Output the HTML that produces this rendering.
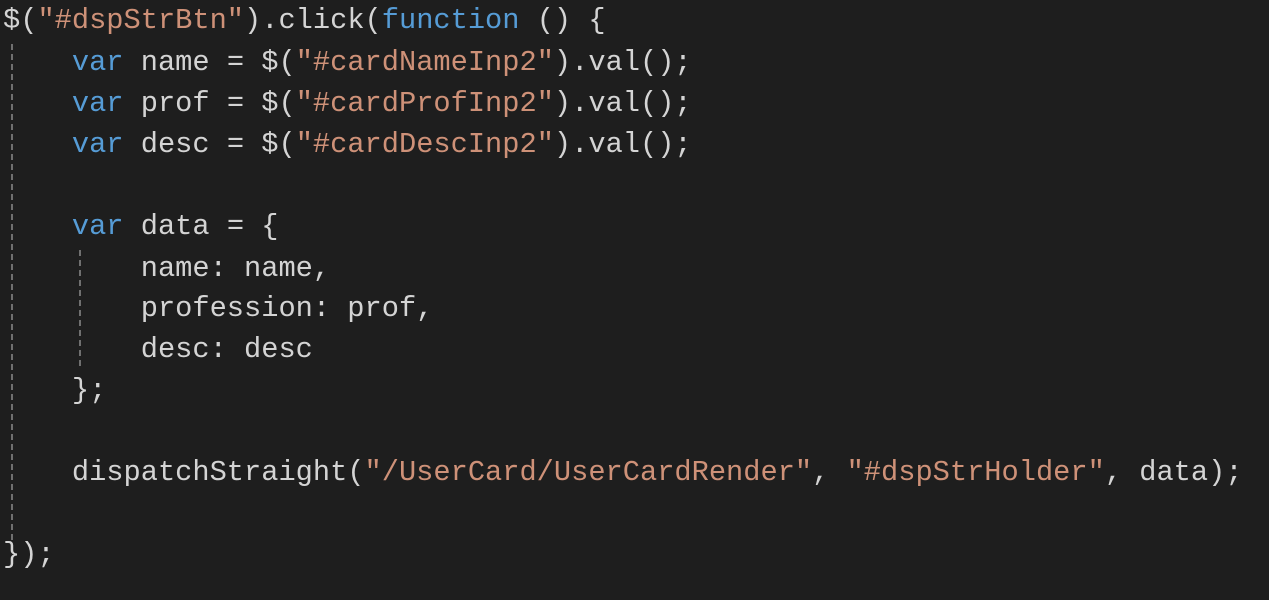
<!DOCTYPE html>
<html><head><meta charset="utf-8"><style>
html,body{margin:0;padding:0;background:#1e1e1e;width:1269px;height:600px;overflow:hidden}
.l{position:absolute;left:3px;height:41px;line-height:41px;font-family:"Liberation Mono",monospace;font-size:28.7px;color:#d4d4d4;white-space:pre}
.k{color:#569cd6}.s{color:#ce9178}
.g{position:absolute;width:2px;background:repeating-linear-gradient(to bottom,#707070 0 6px,transparent 6px 10px)}
</style></head><body>
<div class="g" style="left:11px;top:44px;height:496px"></div>
<div class="g" style="left:79px;top:250px;height:120px"></div>
<div class="l" style="top:0px">$(<span class="s">"#dspStrBtn"</span>).click(<span class="k">function</span> () {</div>
<div class="l" style="top:42px">    <span class="k">var</span> name = $(<span class="s">"#cardNameInp2"</span>).val();</div>
<div class="l" style="top:83px">    <span class="k">var</span> prof = $(<span class="s">"#cardProfInp2"</span>).val();</div>
<div class="l" style="top:124px">    <span class="k">var</span> desc = $(<span class="s">"#cardDescInp2"</span>).val();</div>
<div class="l" style="top:206px">    <span class="k">var</span> data = {</div>
<div class="l" style="top:248px">        name: name,</div>
<div class="l" style="top:288px">        profession: prof,</div>
<div class="l" style="top:329px">        desc: desc</div>
<div class="l" style="top:370px">    };</div>
<div class="l" style="top:452px">    dispatchStraight(<span class="s">"/UserCard/UserCardRender"</span>, <span class="s">"#dspStrHolder"</span>, data);</div>
<div class="l" style="top:534px">});</div>
</body></html>
